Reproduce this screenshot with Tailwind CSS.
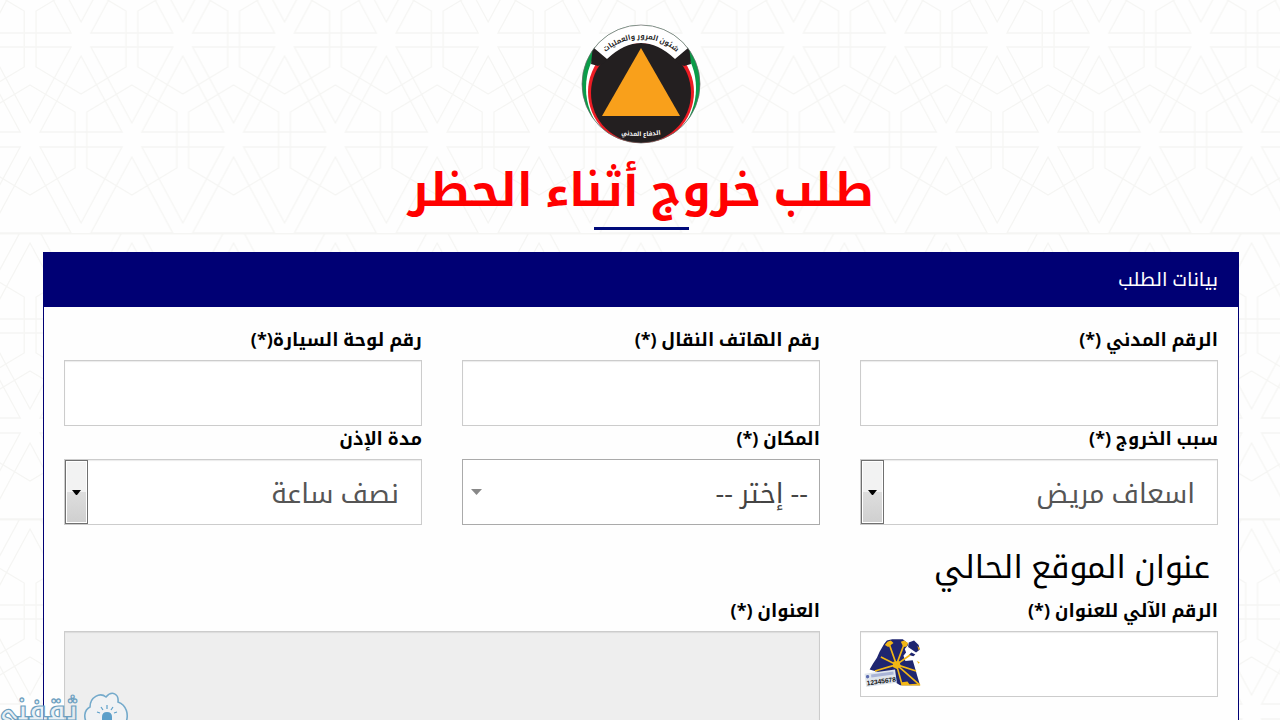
<!DOCTYPE html>
<html lang="ar" dir="rtl">
<head>
    <meta charset="UTF-8">
    <meta name="viewport" content="width=device-width, initial-scale=1.0">
    <title>طلب خروج أثناء الحظر</title>
    <script src="https://cdn.jsdelivr.net/npm/@tailwindcss/browser@4"></script>
    <style>
        body {
            font-family: 'Open Sans', 'Noto Kufi Arabic', 'Noto Sans Arabic', 'Noto Sans', sans-serif;
        }
    </style>
</head>
<body class="relative isolate h-screen overflow-hidden bg-[#fefefe] text-black">

    <!-- Background pattern -->
    <svg class="absolute inset-0 -z-10 h-full w-full" aria-hidden="true">
        <defs>
            <g id="rays" fill="none" stroke="#f5f5f3" stroke-width="1.3">
                <path d="M0 17 41 93H-41Z"/>
                <path d="M0-17 41-93H-41Z"/>
            </g>
            <g id="star">
                <use href="#rays"/>
                <path d="M0-55 45-28V28L0 55-45 28V-28Z" fill="none" stroke="#f5f5f3" stroke-width="1.3"/>
            </g>
            <pattern id="tile" width="101.8" height="286" patternUnits="userSpaceOnUse" patternTransform="translate(0 -53)">
                <use href="#rays" x="30" y="-7"/><use href="#rays" x="131.8" y="-7"/>
                <use href="#star" x="81" y="92"/><use href="#star" x="-20.8" y="92"/>
                <use href="#star" x="30" y="193"/><use href="#star" x="131.8" y="193"/>
                <use href="#rays" x="81" y="293"/><use href="#rays" x="-20.8" y="293"/>
                <path d="M0 0H102" stroke="#f5f5f3" stroke-width="3"/>
            </pattern>
        </defs>
        <rect width="100%" height="100%" fill="url(#tile)"/>
    </svg>

    <header class="mr-[41px] ml-[43px] flex flex-col items-center pt-6">
        <svg class="h-[120px] w-[120px]" viewBox="0 0 120 120" role="img" aria-label="شئون المرور والعمليات - الدفاع المدني">
            <defs>
                <clipPath id="badge"><circle cx="60" cy="60" r="59"/></clipPath>
                <path id="arcTop" d="M16 38A53 53 0 0 1 104 38"/>
                <path id="arcBottom" d="M24 107Q60 117 96 107"/>
            </defs>
            <g clip-path="url(#badge)">
                <path d="M0 0H120V120H0Z" fill="#0a9c48"/>
                <ellipse cx="60" cy="64" rx="55" ry="60" fill="#fff"/>
                <ellipse cx="60" cy="68" rx="53" ry="53" fill="#ed1c24"/>
                <circle cx="60" cy="69" r="50" fill="#231f20"/>
                <path d="M12 21 27 34 23 39 17 42 10 40ZM108 21 93 34 97 39 103 42 110 40Z" fill="#231f20"/>
                <path d="M0 0V13L13 24 26 35Q60 3 94 35L107 24 120 13V0Z" fill="#fff"/>
            </g>
            <circle cx="60" cy="60" r="59" fill="none" stroke="#666" stroke-width=".7"/>
            <path d="M60 24 99 92H21Z" fill="#f9a01b"/>
            <text font-size="7" font-weight="700" fill="#222" text-anchor="middle"><textPath href="#arcTop" startOffset="50%">شئون المرور والعمليات</textPath></text>
            <text font-size="6" font-weight="700" fill="#fff" text-anchor="middle"><textPath href="#arcBottom" startOffset="50%">الدفاع المدني</textPath></text>
        </svg>
        <h1 class="mt-2 mb-[3px] text-[46px] leading-[72px] font-bold text-[#f00]">طلب خروج أثناء الحظر</h1>
        <div class="h-[3px] w-[95px] bg-[#000b7a]"></div>
    </header>

    <main class="mt-[22px] mr-[41px] ml-[43px] border border-[#000074] bg-[#fefefe]">
        <h2 class="h-[54px] bg-[#000074] px-5 text-[19px] leading-[52px] text-white">بيانات الطلب</h2>
        <form class="grid grid-cols-3 gap-x-10 px-5 pt-5">
            <div>
                <label for="civil" class="mb-2 block text-[18px] leading-[25px] font-bold">الرقم المدني (*)</label>
                <input id="civil" type="text" class="block h-[66px] w-full border border-[#ccc] bg-white px-5 text-[27px] shadow-[inset_0_1px_1px_rgba(0,0,0,0.08)]">
            </div>
            <div>
                <label for="phone" class="mb-2 block text-[18px] leading-[25px] font-bold">رقم الهاتف النقال (*)</label>
                <input id="phone" type="text" class="block h-[66px] w-full border border-[#ccc] bg-white px-5 text-[27px] shadow-[inset_0_1px_1px_rgba(0,0,0,0.08)]">
            </div>
            <div>
                <label for="plate" class="mb-2 block text-[18px] leading-[25px] font-bold">رقم لوحة السيارة(*)</label>
                <input id="plate" type="text" class="block h-[66px] w-full border border-[#ccc] bg-white px-5 text-[27px] shadow-[inset_0_1px_1px_rgba(0,0,0,0.08)]">
            </div>

            <div>
                <label for="reason" class="mb-2 block text-[18px] leading-[25px] font-bold">سبب الخروج (*)</label>
                <div class="relative">
                    <select id="reason" class="block h-[66px] w-full appearance-none border border-[#ccc] bg-white px-[22px] pt-0.5 text-[27px] text-[#555] shadow-[inset_0_1px_1px_rgba(0,0,0,0.08)]">
                        <option>اسعاف مريض</option>
                    </select>
                    <span class="pointer-events-none absolute inset-y-px left-px flex w-[23px] items-center justify-center border border-[#707070] bg-linear-to-b from-[#f2f2f2] from-50% via-[#dedede] via-50% to-[#cfcfcf] shadow-[inset_0_0_0_1px_#fff]">
                        <svg class="h-[5px] w-[9px]" viewBox="0 0 9 5"><path d="M0 0H9L5 5H4Z"/></svg>
                    </span>
                </div>
            </div>
            <div>
                <label for="place" class="mb-2 block text-[18px] leading-[25px] font-bold">المكان (*)</label>
                <div class="relative">
                    <select id="place" class="block h-[66px] w-full appearance-none border border-[#aaa] bg-white px-[11px] pt-0.5 text-[27px] text-[#444]">
                        <option>-- إختر --</option>
                    </select>
                    <svg class="pointer-events-none absolute inset-y-0 left-[9px] my-auto h-[6px] w-[11px]" viewBox="0 0 11 6"><path d="M0 0H11L5.500 6Z" fill="#888"/></svg>
                </div>
            </div>
            <div>
                <label for="duration" class="mb-2 block text-[18px] leading-[25px] font-bold">مدة الإذن</label>
                <div class="relative">
                    <select id="duration" class="block h-[66px] w-full appearance-none border border-[#ccc] bg-white px-[22px] pt-0.5 text-[27px] text-[#555] shadow-[inset_0_1px_1px_rgba(0,0,0,0.08)]">
                        <option>نصف ساعة</option>
                    </select>
                    <span class="pointer-events-none absolute inset-y-px left-px flex w-[23px] items-center justify-center border border-[#707070] bg-linear-to-b from-[#f2f2f2] from-50% via-[#dedede] via-50% to-[#cfcfcf] shadow-[inset_0_0_0_1px_#fff]">
                        <svg class="h-[5px] w-[9px]" viewBox="0 0 9 5"><path d="M0 0H9L5 5H4Z"/></svg>
                    </span>
                </div>
            </div>

            <h3 class="col-span-3 px-2 pt-3.5 pb-1.5 text-[32px] leading-[53px]">عنوان الموقع الحالي</h3>

            <div>
                <label for="paci" class="mb-2 block text-[18px] leading-[25px] font-bold">الرقم الآلي للعنوان (*)</label>
                <div class="relative">
                    <input id="paci" type="text" class="block h-[66px] w-full border border-[#ccc] bg-white pr-5 pl-16 text-[27px] shadow-[inset_0_1px_1px_rgba(0,0,0,0.08)]">
                    <svg class="pointer-events-none absolute top-[6px] left-1 h-[50px] w-[58px]" viewBox="15 20 175 150" aria-hidden="true">
                        <path d="M76 40 84 30 100 26H132L144 36 148 44 138 56 142 66 134 76 140 92 162 90 168 110 176 138 184 165H124L60 126 32 118 42 100 54 82 62 64Z" fill="#1f2670"/>
                        <path d="M150 36 166 30 180 44 183 58 172 66 160 58 148 50ZM158 66 170 72 164 78 150 74Z" fill="#1f2670"/>
                        <path d="M113 103 90 38M113 103 138 36M113 103 66 80M113 103 154 74M113 103 48 122M113 103 172 122M113 103 180 162M113 103 130 164" stroke="#f2b715" stroke-width="5"/>
                        <path d="M78 44 86 34 96 30 104 38 96 44 88 50ZM126 34 136 30 148 38 144 48 134 50ZM130 156 146 154 152 162 184 160 185 166H128ZM176 46 184 54 180 60ZM174 92 183 96 180 100ZM103 94 122 92 126 108 114 116 102 110Z" fill="#f2b715"/>
                        <g transform="rotate(-8 65 145)">
                            <path d="M19 124H112V164H19Z" fill="#dfe5ec"/>
                            <path d="M38 129H106V138H38Z" fill="#a9b4d6"/>
                            <circle cx="27" cy="134" r="5" fill="#5b6bb0"/>
                            <text x="66" y="160" direction="ltr" text-anchor="middle" font-family="Liberation Sans" font-size="20" font-weight="700" fill="#111">12345678</text>
                        </g>
                    </svg>
                </div>
            </div>
            <div class="col-span-2">
                <label for="address" class="mb-2 block w-full text-[18px] leading-[25px] font-bold">العنوان (*)</label>
                <textarea id="address" readonly class="block h-[140px] w-full resize-none border border-[#ccc] bg-[#eee] px-5 text-[27px] shadow-[inset_0_1px_1px_rgba(0,0,0,0.08)]"></textarea>
            </div>
        </form>
    </main>

    <!-- Site watermark -->
    <svg class="pointer-events-none absolute bottom-0 left-0 h-[35px] w-[135px]" viewBox="0 0 135 35" role="img" aria-label="ثقفني">
        <text x="78" y="35" direction="rtl" font-size="28" font-weight="700" fill="#dce8ef" fill-opacity=".6" stroke="#6c9fc0" stroke-width="1.2">ثقفني</text>
        <path d="M88 40C83 33 84 25 90 22C90 12 100 7 106 12C112 5 119 9 118 17C126 20 130 29 125 40" fill="#f2f6f9" fill-opacity=".5" stroke="#74aacb" stroke-width="1.600"/>
        <path d="M102 40V32Q102 27 107 27T112 32V40Z" fill="#5d9fc9"/>
        <path d="M107 20V24M101 22 103 25M113 22 111 25M97 27 100 28M117 27 114 28" stroke="#5d9fc9" stroke-width="1.200"/>
    </svg>
</body>
</html>
